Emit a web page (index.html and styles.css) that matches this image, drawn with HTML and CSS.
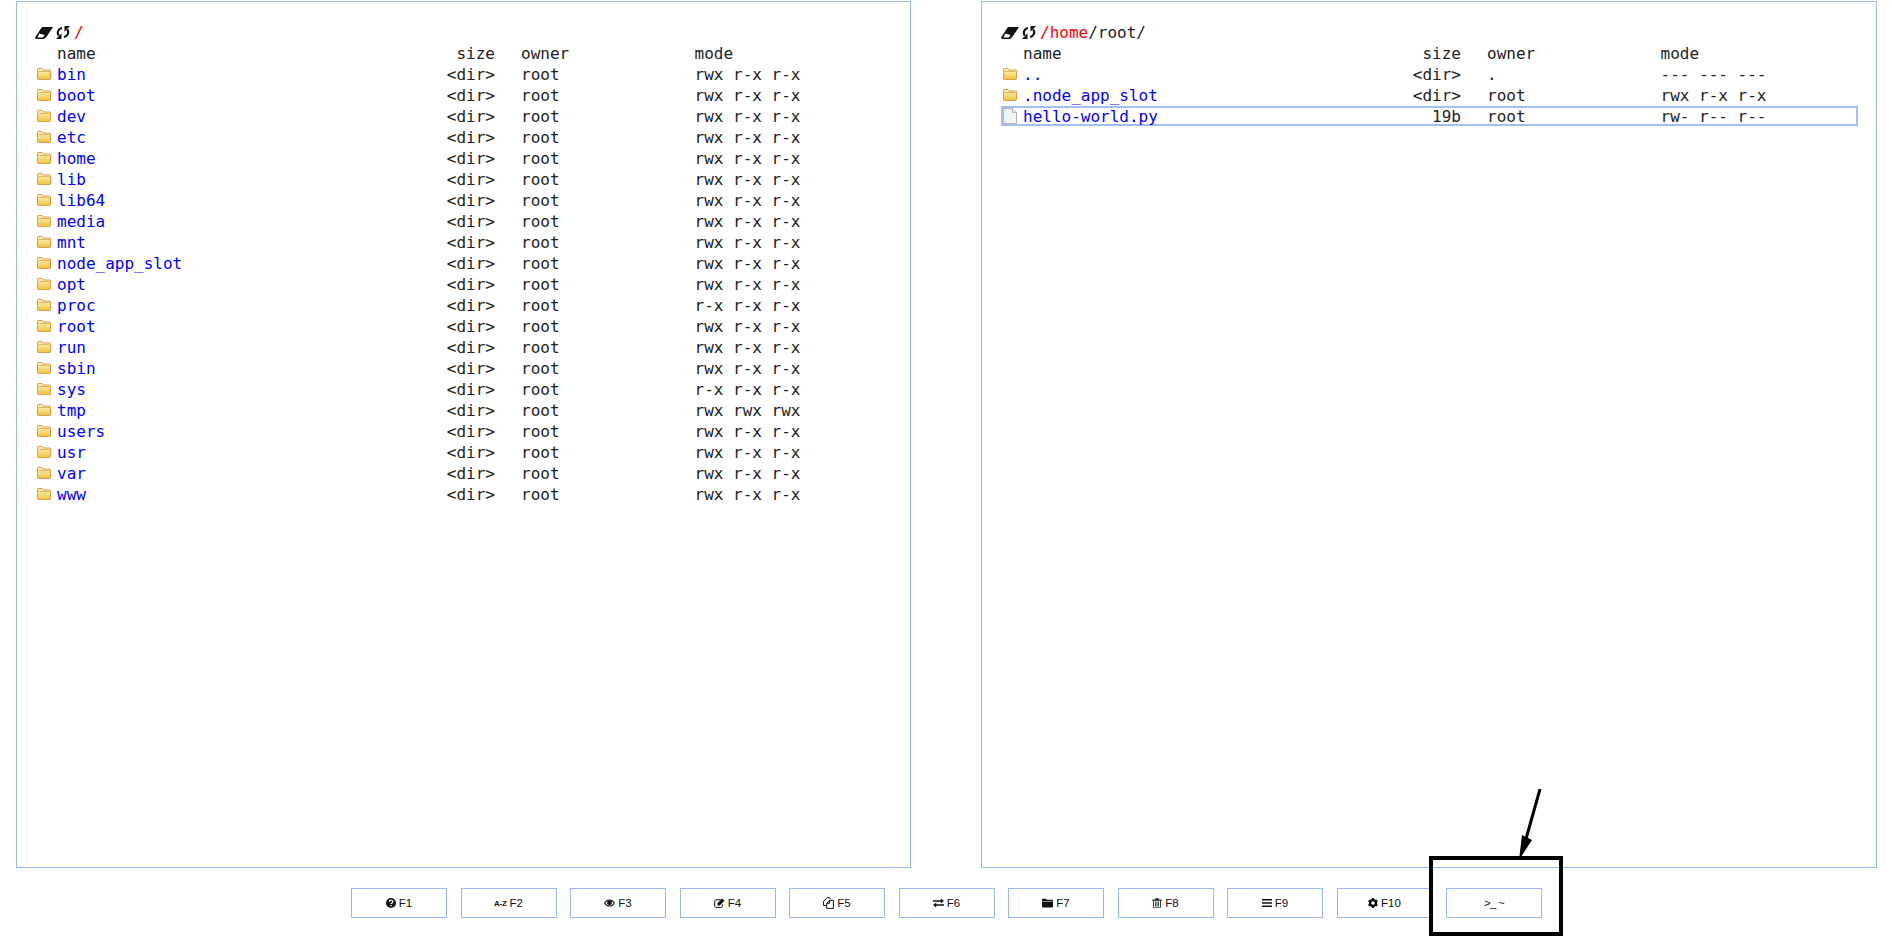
FILE: index.html
```html
<!DOCTYPE html>
<html lang="en">
<head>
  <meta charset="UTF-8">
  <title>Cloud Commander</title>
  <link rel="stylesheet" href="styles.css">
</head>
<body>
  <svg class="sprites" width="0" height="0" aria-hidden="true">
    <defs>
      <linearGradient id="folder-fill" x1="0" y1="0" x2="0" y2="1">
        <stop offset="0" stop-color="#fff6c8"></stop>
        <stop offset="1" stop-color="#efc43a"></stop>
      </linearGradient>
      <symbol id="i-folder" viewBox="0 0 14 12">
        <path d="M.5 11V1L1 .5h4l1 1.500h7l.5.500V11l-.5.500H1z" fill="url(#folder-fill)" stroke="#d99f4e"></path>
        <path d="M1.500 3.500h11" stroke="#e2b566" fill="none"></path>
      </symbol>
      <symbol id="i-file" viewBox="0 0 14 16">
        <path d="M.5.500h9l4 4v11H.5z" fill="#f3f3f3" stroke="#b4b4b4"></path>
        <path d="M9.500.500v4h4" fill="#e6e6e6" stroke="#b4b4b4"></path>
      </symbol>
      <symbol id="i-eraser" viewBox="0 0 18 12">
        <path d="M7 0H18L11.500 9.800 9 12H1L0 10.500z" fill="#111"></path>
        <path d="M4.300 6.500l5.200 1.500-1.500 2.500H2.400z" fill="#fff"></path>
      </symbol>
      <symbol id="i-refresh" viewBox="0 0 14 13">
        <path d="M6 2A4.700 4.700 0 0 0 2.800 9.500" fill="none" stroke="#111" stroke-width="2.200"></path>
        <path d="M5.500 7.200V13H0z" fill="#111"></path>
        <path d="M8 11A4.700 4.700 0 0 0 11.200 3.500" fill="none" stroke="#111" stroke-width="2.200"></path>
        <path d="M8.500 5.800V0H14z" fill="#111"></path>
      </symbol>
      <symbol id="i-help" viewBox="0 0 10 10">
        <circle cx="5" cy="5" r="5" fill="#111"></circle>
        <path d="M3.200 3.800C3.300 2.700 4 2.200 5 2.200s1.900.6 1.900 1.500C6.900 5 5 4.900 5 6.100" fill="none" stroke="#fff" stroke-width="1.300"></path>
        <path d="M4.300 7h1.400v1.300H4.300z" fill="#fff"></path>
      </symbol>
      <symbol id="i-eye" viewBox="0 0 12 8">
        <path d="M.6 4C2 1.700 4 .6 6 .6S10 1.700 11.400 4C10 6.300 8 7.400 6 7.400S2 6.300.6 4z" fill="none" stroke="#111" stroke-width="1.100"></path>
        <circle cx="6" cy="3.800" r="2.700" fill="#111"></circle>
      </symbol>
      <symbol id="i-edit" viewBox="0 0 12 11">
        <path d="M8 2H1.800L.7 3v6.300l1 1h6.500l1-1V7" fill="none" stroke="#111" stroke-width="1.100"></path>
        <path d="M3.800 5.800L9 .5 11.500 3 6.300 8.300H3.800z" fill="#111"></path>
      </symbol>
      <symbol id="i-copy" viewBox="0 0 11 12">
        <path d="M3.500 8.500H.6V4.300L4.200.6h2.500l.8 1.600" fill="none" stroke="#111"></path>
        <path d="M3.700 11.400V6.300L6.500 3.300h3.900v8.100z" fill="#fff" stroke="#111"></path>
        <path d="M6.500 3.300v3H3.700" fill="none" stroke="#111"></path>
      </symbol>
      <symbol id="i-move" viewBox="0 0 11 9">
        <path d="M0 1.700h7.800V0L11 2.500 7.800 5V3.300H0zM11 5.700H3.200V4L0 6.500 3.200 9V7.300H11z" fill="#111"></path>
      </symbol>
      <symbol id="i-dir" viewBox="0 0 11 9">
        <path d="M0 1l.5-.7h3.500l.7 1h5.800l.5.700V2.500H0zM0 3h11v5.300l-.5.700H.5L0 8.300z" fill="#111"></path>
      </symbol>
      <symbol id="i-trash" viewBox="0 0 9 10">
        <path d="M0 1.800h9v.8H0zM3 1.800V.5h3v1.300" fill="#111" stroke="#111" stroke-width=".4"></path>
        <path d="M1 2.500v6.800l.5.500h6l.5-.5V2.500M3 3.500v5M4.500 3.500v5M6 3.500v5" fill="none" stroke="#111" stroke-width=".8"></path>
      </symbol>
      <symbol id="i-menu" viewBox="0 0 10 8">
        <path d="M0 0h10v1.600H0zM0 3.200h10v1.600H0zM0 6.400h10V8H0z" fill="#111"></path>
      </symbol>
      <symbol id="i-gear" viewBox="0 0 11 11">
        <circle cx="5.500" cy="5.500" r="3.200" fill="none" stroke="#111" stroke-width="2.400"></circle>
        <path d="M4.300 0h2.400v11H4.300z" fill="#111"></path>
        <path d="M4.300 0h2.400v11H4.300z" fill="#111" transform="rotate(60 5.500 5.500)"></path>
        <path d="M4.300 0h2.400v11H4.300z" fill="#111" transform="rotate(120 5.500 5.500)"></path>
        <circle cx="5.500" cy="5.500" r="2" fill="#fff"></circle>
      </symbol>
    </defs>
  </svg>

  <main class="panels">
    <section class="panel">
      <div class="path">
        <svg class="path-icon eraser"><use href="#i-eraser"></use></svg>
        <svg class="path-icon refresh"><use href="#i-refresh"></use></svg>
        <span class="link">/</span>
      </div>
      <div class="row head"><span class="name">name</span><span class="size">size</span><span class="owner">owner</span><span class="mode">mode</span></div>
      <div class="row"><svg class="type"><use href="#i-folder"></use></svg><a class="name">bin</a><span class="size">&lt;dir&gt;</span><span class="owner">root</span><span class="mode">rwx r-x r-x</span></div>
      <div class="row"><svg class="type"><use href="#i-folder"></use></svg><a class="name">boot</a><span class="size">&lt;dir&gt;</span><span class="owner">root</span><span class="mode">rwx r-x r-x</span></div>
      <div class="row"><svg class="type"><use href="#i-folder"></use></svg><a class="name">dev</a><span class="size">&lt;dir&gt;</span><span class="owner">root</span><span class="mode">rwx r-x r-x</span></div>
      <div class="row"><svg class="type"><use href="#i-folder"></use></svg><a class="name">etc</a><span class="size">&lt;dir&gt;</span><span class="owner">root</span><span class="mode">rwx r-x r-x</span></div>
      <div class="row"><svg class="type"><use href="#i-folder"></use></svg><a class="name">home</a><span class="size">&lt;dir&gt;</span><span class="owner">root</span><span class="mode">rwx r-x r-x</span></div>
      <div class="row"><svg class="type"><use href="#i-folder"></use></svg><a class="name">lib</a><span class="size">&lt;dir&gt;</span><span class="owner">root</span><span class="mode">rwx r-x r-x</span></div>
      <div class="row"><svg class="type"><use href="#i-folder"></use></svg><a class="name">lib64</a><span class="size">&lt;dir&gt;</span><span class="owner">root</span><span class="mode">rwx r-x r-x</span></div>
      <div class="row"><svg class="type"><use href="#i-folder"></use></svg><a class="name">media</a><span class="size">&lt;dir&gt;</span><span class="owner">root</span><span class="mode">rwx r-x r-x</span></div>
      <div class="row"><svg class="type"><use href="#i-folder"></use></svg><a class="name">mnt</a><span class="size">&lt;dir&gt;</span><span class="owner">root</span><span class="mode">rwx r-x r-x</span></div>
      <div class="row"><svg class="type"><use href="#i-folder"></use></svg><a class="name">node_app_slot</a><span class="size">&lt;dir&gt;</span><span class="owner">root</span><span class="mode">rwx r-x r-x</span></div>
      <div class="row"><svg class="type"><use href="#i-folder"></use></svg><a class="name">opt</a><span class="size">&lt;dir&gt;</span><span class="owner">root</span><span class="mode">rwx r-x r-x</span></div>
      <div class="row"><svg class="type"><use href="#i-folder"></use></svg><a class="name">proc</a><span class="size">&lt;dir&gt;</span><span class="owner">root</span><span class="mode">r-x r-x r-x</span></div>
      <div class="row"><svg class="type"><use href="#i-folder"></use></svg><a class="name">root</a><span class="size">&lt;dir&gt;</span><span class="owner">root</span><span class="mode">rwx r-x r-x</span></div>
      <div class="row"><svg class="type"><use href="#i-folder"></use></svg><a class="name">run</a><span class="size">&lt;dir&gt;</span><span class="owner">root</span><span class="mode">rwx r-x r-x</span></div>
      <div class="row"><svg class="type"><use href="#i-folder"></use></svg><a class="name">sbin</a><span class="size">&lt;dir&gt;</span><span class="owner">root</span><span class="mode">rwx r-x r-x</span></div>
      <div class="row"><svg class="type"><use href="#i-folder"></use></svg><a class="name">sys</a><span class="size">&lt;dir&gt;</span><span class="owner">root</span><span class="mode">r-x r-x r-x</span></div>
      <div class="row"><svg class="type"><use href="#i-folder"></use></svg><a class="name">tmp</a><span class="size">&lt;dir&gt;</span><span class="owner">root</span><span class="mode">rwx rwx rwx</span></div>
      <div class="row"><svg class="type"><use href="#i-folder"></use></svg><a class="name">users</a><span class="size">&lt;dir&gt;</span><span class="owner">root</span><span class="mode">rwx r-x r-x</span></div>
      <div class="row"><svg class="type"><use href="#i-folder"></use></svg><a class="name">usr</a><span class="size">&lt;dir&gt;</span><span class="owner">root</span><span class="mode">rwx r-x r-x</span></div>
      <div class="row"><svg class="type"><use href="#i-folder"></use></svg><a class="name">var</a><span class="size">&lt;dir&gt;</span><span class="owner">root</span><span class="mode">rwx r-x r-x</span></div>
      <div class="row"><svg class="type"><use href="#i-folder"></use></svg><a class="name">www</a><span class="size">&lt;dir&gt;</span><span class="owner">root</span><span class="mode">rwx r-x r-x</span></div>
    </section>

    <section class="panel panel-right">
      <div class="path">
        <svg class="path-icon eraser"><use href="#i-eraser"></use></svg>
        <svg class="path-icon refresh"><use href="#i-refresh"></use></svg>
        <span><span class="link">/home</span>/root/</span>
      </div>
      <div class="row head"><span class="name">name</span><span class="size">size</span><span class="owner">owner</span><span class="mode">mode</span></div>
      <div class="row"><svg class="type"><use href="#i-folder"></use></svg><a class="name">..</a><span class="size">&lt;dir&gt;</span><span class="owner">.</span><span class="mode">--- --- ---</span></div>
      <div class="row"><svg class="type"><use href="#i-folder"></use></svg><a class="name">.node_app_slot</a><span class="size">&lt;dir&gt;</span><span class="owner">root</span><span class="mode">rwx r-x r-x</span></div>
      <div class="row current"><svg class="type file"><use href="#i-file"></use></svg><a class="name">hello-world.py</a><span class="size">19b</span><span class="owner">root</span><span class="mode">rw- r-- r--</span></div>
    </section>
  </main>

  <footer class="keys">
    <button class="key"><svg class="key-icon"><use href="#i-help"></use></svg>F1</button>
    <button class="key"><span class="az">A-Z</span>F2</button>
    <button class="key"><svg class="key-icon wide"><use href="#i-eye"></use></svg>F3</button>
    <button class="key"><svg class="key-icon wide"><use href="#i-edit"></use></svg>F4</button>
    <button class="key"><svg class="key-icon wide tall"><use href="#i-copy"></use></svg>F5</button>
    <button class="key"><svg class="key-icon wide"><use href="#i-move"></use></svg>F6</button>
    <button class="key"><svg class="key-icon wide"><use href="#i-dir"></use></svg>F7</button>
    <button class="key"><svg class="key-icon"><use href="#i-trash"></use></svg>F8</button>
    <button class="key"><svg class="key-icon"><use href="#i-menu"></use></svg>F9</button>
    <button class="key"><svg class="key-icon"><use href="#i-gear"></use></svg>F10</button>
    <button class="key term">&gt;_ ~</button>
  </footer>

  <!-- annotation drawn over the screenshot -->
  <div class="callout"></div>
  <svg class="arrow" width="40" height="80" viewBox="0 0 40 80">
    <path d="M29 0L15 50" stroke="#000" stroke-width="3" fill="none"></path>
    <path d="M8 71L11 46 21 51z" fill="#000"></path>
  </svg>
</body>
</html>
```

FILE: styles.css
```css
html, body {
  height: 100%;
}

body {
  margin: 0;
  background: #fff;
  color: #222;
  font-family: "Liberation Sans", Arial, sans-serif;
  overflow: hidden;
}

.sprites {
  position: absolute;
}

.panels {
  display: flex;
  justify-content: space-between;
  padding: 1px 15px 0 16px;
}

.panel {
  box-sizing: border-box;
  width: 895px;
  height: 867px;
  padding: 20px 18px 0 18px;
  border: 1px solid #98b8f8;
  font: 16px/21px "DejaVu Sans Mono", monospace;
}

.panel-right {
  width: 896px;
  padding-left: 19px;
}

.path {
  display: flex;
  align-items: center;
  height: 21px;
}

.path-icon {
  flex: none;
}

.eraser {
  width: 18px;
  height: 12px;
  margin-right: 3px;
}

.refresh {
  width: 14px;
  height: 13px;
  margin-right: 4px;
}

.link {
  color: #f00;
}

.row {
  display: flex;
  height: 21px;
  position: relative;
  padding-left: 22px;
  white-space: pre;
}

.type {
  position: absolute;
  left: 2px;
  top: 4px;
  width: 14px;
  height: 12px;
}

.type.file {
  top: 2px;
  height: 16px;
}

.name {
  width: 331px;
  color: #00f;
}

.head .name {
  color: #222;
}

.size {
  width: 107px;
  text-align: right;
}

.owner {
  width: 173.500px;
  margin-left: 26px;
}

.current {
  height: 20px;
  box-shadow: inset 0 0 0 2px #a4bff5;
}

.keys {
  display: flex;
  justify-content: center;
  gap: 13.500px;
  padding: 20px 0 0 1px;
}

.key {
  display: flex;
  align-items: center;
  justify-content: center;
  gap: 3px;
  box-sizing: border-box;
  width: 96px;
  height: 30px;
  padding: 0;
  border: 1px solid #98b8f8;
  background: #fff;
  color: #111;
  font: 11.500px "Liberation Sans", Arial, sans-serif;
}

.term {
  letter-spacing: -0.700px;
}

.key-icon {
  width: 10px;
  height: 10px;
}

.key-icon.wide {
  width: 11px;
}

.key-icon.tall {
  height: 12px;
}

.az {
  font-size: 8px;
  font-weight: bold;
  letter-spacing: -0.300px;
}

.callout {
  position: absolute;
  left: 1429px;
  top: 856px;
  width: 126px;
  height: 72px;
  border: 4px solid #000;
}

.arrow {
  position: absolute;
  left: 1511px;
  top: 789px;
}
```
